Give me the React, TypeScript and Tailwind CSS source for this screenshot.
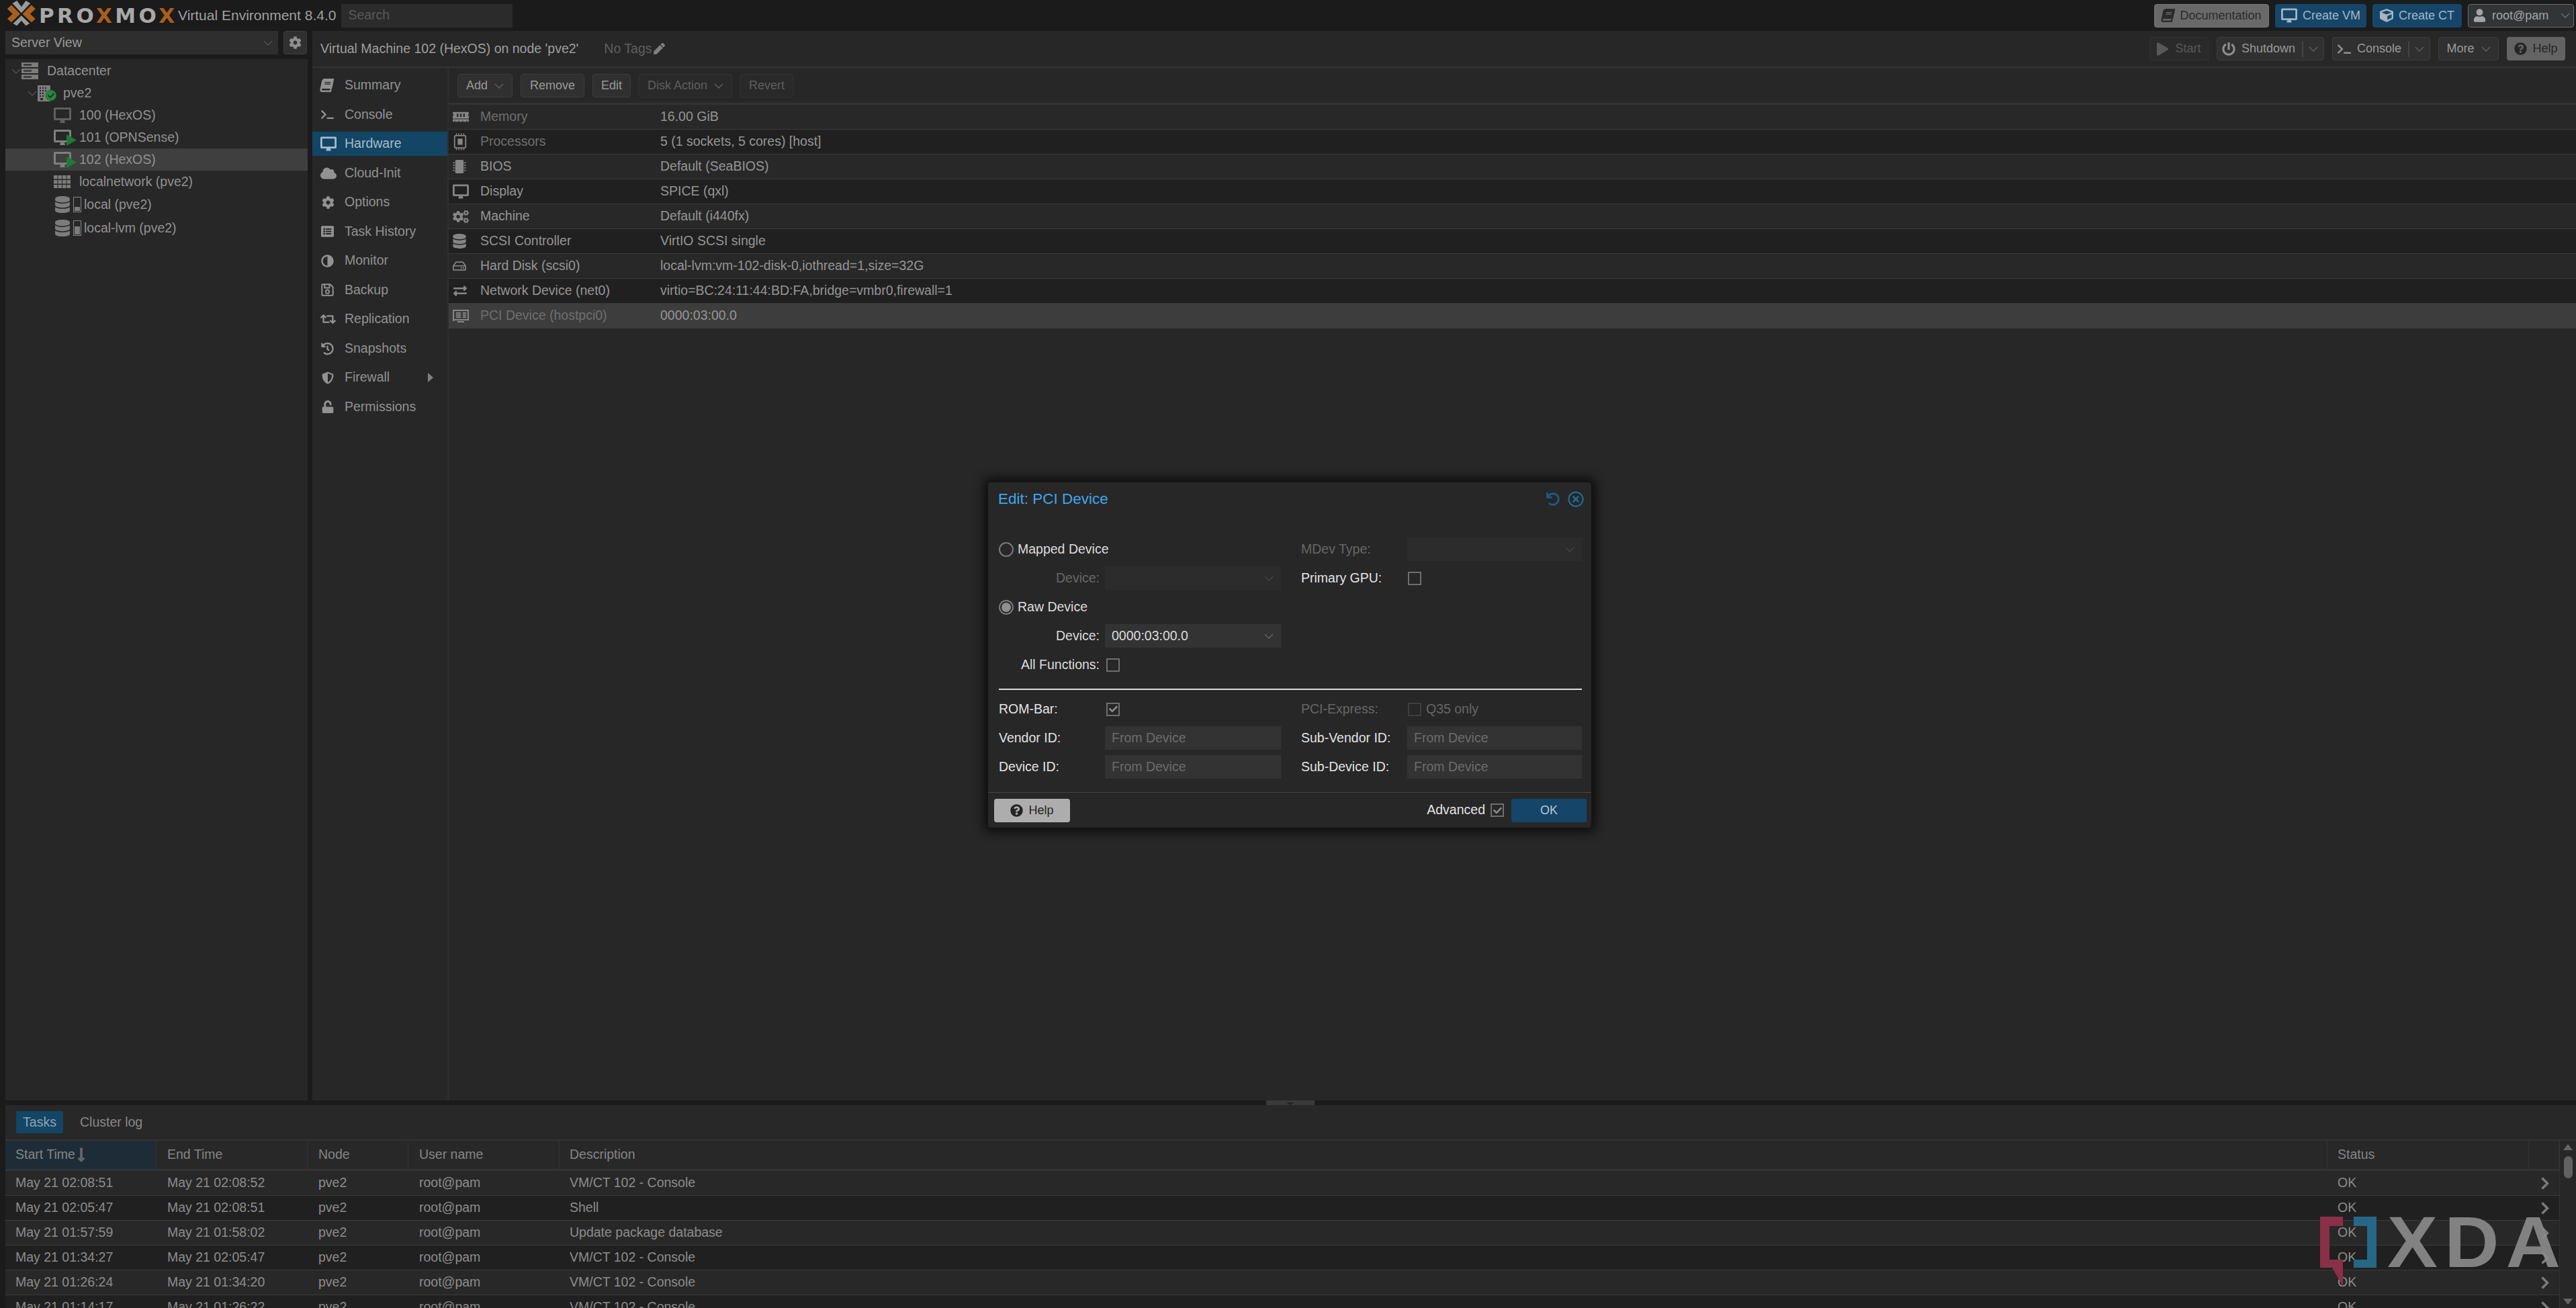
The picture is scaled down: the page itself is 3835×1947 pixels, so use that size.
import {
  FaAdjust,
  FaBook,
  FaCheck,
  FaCheckCircle,
  FaCloud,
  FaCog,
  FaCogs,
  FaCube,
  FaDatabase,
  FaExchangeAlt,
  FaHistory,
  FaListAlt,
  FaLongArrowAltDown,
  FaMemory,
  FaMicrochip,
  FaPen,
  FaPlay,
  FaPowerOff,
  FaQuestionCircle,
  FaRegHdd,
  FaRegSave,
  FaRegTimesCircle,
  FaRetweet,
  FaShieldAlt,
  FaTerminal,
  FaUndo,
  FaUnlock,
  FaUser,
} from "react-icons/fa";

function Caret({ className = "text-[#666666]" }: { className?: string }) {
  return (
    <svg viewBox="0 0 14 8" className={`w-[14px] h-[8px] shrink-0 ${className}`} fill="none" stroke="currentColor" strokeWidth="1.3">
      <path d="M1 1l6 6 6-6" />
    </svg>
  );
}

function Monitor({ className = "w-[24px] h-[22px]" }: { className?: string }) {
  return (
    <svg viewBox="0 0 26 23" className={className} fill="currentColor" fillRule="evenodd">
      <path d="M2 0h22a2 2 0 0 1 2 2v15a2 2 0 0 1-2 2h-8l1 4H9l1-4H2a2 2 0 0 1-2-2V2a2 2 0 0 1 2-2zM3 3v13h20V3z" />
    </svg>
  );
}

function CpuIcon() {
  return (
    <svg viewBox="0 0 24 30" className="w-[22px] h-[30px]" fill="none" stroke="currentColor">
      <rect x="3" y="5" width="18" height="20" rx="2" strokeWidth="2" />
      <rect x="8" y="10" width="8" height="10" fill="currentColor" stroke="none" />
      <path d="M6 1v4M10 1v4M14 1v4M18 1v4M6 25v4M10 25v4M14 25v4M18 25v4" strokeWidth="1.5" />
    </svg>
  );
}

function PciIcon() {
  return (
    <svg viewBox="0 0 24 24" className="w-[24px] h-[24px]" fill="none" stroke="currentColor">
      <path d="M1 3v17M1 4h22v14H1" strokeWidth="2" />
      <path d="M5 8h7M5 11h7M5 14h7M15 8h5M15 11h5M15 14h5M7 21h10" strokeWidth="2" />
    </svg>
  );
}

function RackIcon() {
  return (
    <svg viewBox="0 0 25 28" className="w-[25px] h-[28px]" fill="currentColor">
      <rect x="0" y="1" width="25" height="7" />
      <rect x="0" y="10" width="25" height="7" />
      <rect x="0" y="19" width="25" height="7" />
      <rect x="3" y="3.5" width="12" height="2" fill="#272727" />
      <rect x="3" y="12.5" width="12" height="2" fill="#272727" />
      <rect x="3" y="21.5" width="12" height="2" fill="#272727" />
    </svg>
  );
}

function NodeIcon() {
  return (
    <span className="relative w-[19px] h-[24px] block text-[#7c7c7c]">
      <svg viewBox="0 0 19 24" className="w-[19px] h-[24px]" fill="currentColor" fillRule="evenodd">
        <path d="M0 0h19v24H0zM3 3v2h2V3zM7 3v2h2V3zM11 3v2h2V3zM3 7v2h2V7zM7 7v2h2V7zM11 7v2h2V7zM3 11v2h2v-2zM7 11v2h2v-2zM3 15v2h2v-2zM7 15v2h2v-2zM4 19v3h4v-3z" />
      </svg>
      <span className="absolute left-[12px] top-[7px] w-[16px] h-[16px] rounded-full bg-[#272727] flex items-center justify-center">
        <FaCheckCircle className="w-[16px] h-[16px] text-[#1f8a3e]" />
      </span>
    </span>
  );
}

function VmIcon({ running, dark }: { running?: boolean; dark?: boolean }) {
  return (
    <span className={`relative w-[26px] h-[23px] block ${dark ? "text-[#5f5f5f]" : "text-[#7f7f7f]"}`}>
      <Monitor className="w-[26px] h-[23px]" />
      {running && (
        <svg viewBox="0 0 15 17" className="absolute left-[19px] top-[7px] w-[15px] h-[17px]" fill="#1f7a34">
          <path d="M0 0l15 8.5L0 17z" />
        </svg>
      )}
    </span>
  );
}

function GridIcon() {
  return (
    <svg viewBox="0 0 25 19" className="w-[25px] h-[19px] text-[#7c7c7c]" fill="currentColor">
      {[0, 7, 14].map((y) =>
        [0, 6.5, 13, 19.5].map((x) => <rect key={`${x}-${y}`} x={x} y={y} width="5.5" height="5.5" />),
      )}
    </svg>
  );
}

function StorageIcon({ fill }: { fill: string }) {
  return (
    <span className="flex items-center gap-[5px] text-[#7c7c7c]">
      <FaDatabase className="w-[22px] h-[25px]" />
      <span className="w-[12px] h-[23px] border border-[#858585] flex items-end p-[1px]">
        <span className={`w-full bg-[#7c7c7c] ${fill}`} />
      </span>
    </span>
  );
}

const navItems = [
  { label: "Summary", icon: <FaBook className="w-[19px] h-[20px] -skew-x-12" /> },
  { label: "Console", icon: <FaTerminal className="w-[21px] h-[15px]" /> },
  { label: "Hardware", icon: <Monitor />, active: true },
  { label: "Cloud-Init", icon: <FaCloud className="w-[24px] h-[20px]" /> },
  { label: "Options", icon: <FaCog className="w-[19px] h-[19px] ml-[2px]" /> },
  { label: "Task History", icon: <FaListAlt className="w-[21px] h-[19px]" /> },
  { label: "Monitor", icon: <FaAdjust className="w-[19px] h-[19px] ml-[1px] rotate-180" /> },
  { label: "Backup", icon: <FaRegSave className="w-[19px] h-[21px] ml-[1px]" /> },
  { label: "Replication", icon: <FaRetweet className="w-[23px] h-[20px]" /> },
  { label: "Snapshots", icon: <FaHistory className="w-[19px] h-[20px] ml-[1px]" /> },
  { label: "Firewall", icon: <FaShieldAlt className="w-[18px] h-[21px] ml-[2px]" />, more: true },
  { label: "Permissions", icon: <FaUnlock className="w-[20px] h-[19px] ml-[1px]" /> },
];

const hardware = [
  { label: "Memory", value: "16.00 GiB", icon: <FaMemory className="w-[24px] h-[20px]" />, dim: true },
  { label: "Processors", value: "5 (1 sockets, 5 cores) [host]", icon: <CpuIcon />, dim: true },
  { label: "BIOS", value: "Default (SeaBIOS)", icon: <FaMicrochip className="w-[20px] h-[26px]" /> },
  { label: "Display", value: "SPICE (qxl)", icon: <Monitor className="w-[24px] h-[22px]" /> },
  { label: "Machine", value: "Default (i440fx)", icon: <FaCogs className="w-[24px] h-[21px]" /> },
  { label: "SCSI Controller", value: "VirtIO SCSI single", icon: <FaDatabase className="w-[20px] h-[22px]" /> },
  { label: "Hard Disk (scsi0)", value: "local-lvm:vm-102-disk-0,iothread=1,size=32G", icon: <FaRegHdd className="w-[20px] h-[20px]" /> },
  { label: "Network Device (net0)", value: "virtio=BC:24:11:44:BD:FA,bridge=vmbr0,firewall=1", icon: <FaExchangeAlt className="w-[22px] h-[20px]" /> },
  { label: "PCI Device (hostpci0)", value: "0000:03:00.0", icon: <PciIcon />, dim: true, selected: true },
];

const tasks = [
  ["May 21 02:08:51", "May 21 02:08:52", "VM/CT 102 - Console"],
  ["May 21 02:05:47", "May 21 02:08:51", "Shell"],
  ["May 21 01:57:59", "May 21 01:58:02", "Update package database"],
  ["May 21 01:34:27", "May 21 02:05:47", "VM/CT 102 - Console"],
  ["May 21 01:26:24", "May 21 01:34:20", "VM/CT 102 - Console"],
  ["May 21 01:14:17", "May 21 01:26:22", "VM/CT 102 - Console"],
];

function TreeRow({ indent, iconW, icon, label, selected, arrow, h = "h-[33px]" }: { indent: string; iconW: string; icon: React.ReactNode; label: string; selected?: boolean; arrow?: boolean; h?: string }) {
  return (
    <div className={`flex items-center text-[19.5px] text-[#919191] ${h} ${indent} ${selected ? "bg-[#3f3f3f]" : ""}`}>
      {arrow && (
        <span className="w-[15px]">
          <Caret className="text-[#505050]" />
        </span>
      )}
      <span className={`${iconW} shrink-0`}>{icon}</span>
      <span className="whitespace-nowrap">{label}</span>
    </div>
  );
}

function TopButton({ icon, label, tone, wide }: { icon: React.ReactNode; label: string; tone: string; wide: string }) {
  return (
    <div className={`h-[35px] flex items-center justify-center gap-[8px] rounded-[4px] text-[18px] ${tone} ${wide}`}>
      {icon}
      <span>{label}</span>
    </div>
  );
}

function ToolButton({ label, w, disabled, menu }: { label: string; w: string; disabled?: boolean; menu?: boolean }) {
  return (
    <div className={`h-[35px] flex items-center justify-center gap-[10px] rounded-[4px] border text-[18px] ${w} ${disabled ? "bg-[#292929] border-[#333333] text-[#5e5e5e]" : "bg-[#303030] border-[#3c3c3c] text-[#999999]"}`}>
      <span className="whitespace-nowrap">{label}</span>
      {menu && <Caret className="text-[#606060]" />}
    </div>
  );
}

function SplitToolButton({ icon, label, w }: { icon: React.ReactNode; label: string; w: string }) {
  return (
    <div className={`h-[35px] flex items-center rounded-[4px] border bg-[#303030] border-[#3c3c3c] text-[18px] text-[#999999] pl-[7px] ${w}`}>
      {icon}
      <span className="ml-[9px] whitespace-nowrap">{label}</span>
      <span className="ml-auto h-[24px] border-l-2 border-[#444444] w-[32px] flex items-center justify-center">
        <Caret className="text-[#606060]" />
      </span>
    </div>
  );
}

function Radio({ on }: { on?: boolean }) {
  return (
    <span className="w-[22px] h-[22px] rounded-full border-2 border-[#7a7a7a] flex items-center justify-center shrink-0">
      {on && <span className="w-[14px] h-[14px] rounded-full bg-[#8f8f8f]" />}
    </span>
  );
}

function Check({ on, disabled }: { on?: boolean; disabled?: boolean }) {
  return (
    <span className={`w-[20px] h-[20px] border-2 flex items-center justify-center shrink-0 ${disabled ? "border-[#3e3e3e]" : "border-[#6e6e6e]"}`}>
      {on && <FaCheck className="w-[13px] h-[13px] text-[#8a8a8a]" />}
    </span>
  );
}

function Combo({ value, disabled, w = "w-[262px]" }: { value?: string; disabled?: boolean; w?: string }) {
  return (
    <div className={`h-[35px] flex items-center pl-[10px] pr-[11px] text-[19.5px] text-[#dcdcdc] ${w} ${disabled ? "bg-[#2c2c2c]" : "bg-[#333333]"}`}>
      <span>{value}</span>
      <span className="ml-auto">
        <Caret className={disabled ? "text-[#444444]" : "text-[#666666]"} />
      </span>
    </div>
  );
}

function IdField({ label, w = "w-[262px]" }: { label: string; w?: string }) {
  return (
    <div className="h-[35px] flex items-center text-[19.5px]">
      <span className="w-[158px] text-[#e2e2e2]">{label}</span>
      <div className={`h-[35px] flex items-center pl-[10px] bg-[#333333] text-[#6c6c6c] ${w}`}>From Device</div>
    </div>
  );
}

function PciDialog() {
  return (
    <div className="absolute left-[1471px] top-[718px] w-[898px] h-[514px] flex flex-col bg-[#272727] rounded-[4px] shadow-[0_0_16px_6px_#0c0c0c] text-[19.5px]">
      <div className="h-[50px] flex items-center pl-[15px] pr-[11px]">
        <span className="text-[22.5px] text-[#3ea6ee]">Edit: PCI Device</span>
        <FaUndo className="ml-auto w-[20px] h-[20px] text-[#1d5a85]" />
        <FaRegTimesCircle className="ml-[12px] w-[24px] h-[24px] text-[#1d6d95]" />
      </div>
      <div className="flex-1 pl-[16px] pr-[14px] pt-[32px]">
        <div className="flex gap-[30px]">
          <div className="w-[420px] flex flex-col gap-[8px]">
            <div className="h-[35px] flex items-center gap-[6px] text-[#dcdcdc]">
              <Radio />
              Mapped Device
            </div>
            <div className="h-[35px] flex items-center justify-end gap-[8px]">
              <span className="text-[#686868]">Device:</span>
              <Combo disabled />
            </div>
            <div className="h-[35px] flex items-center gap-[6px] text-[#dcdcdc]">
              <Radio on />
              Raw Device
            </div>
            <div className="h-[35px] flex items-center justify-end gap-[8px]">
              <span className="text-[#dcdcdc]">Device:</span>
              <Combo value="0000:03:00.0" />
            </div>
            <div className="h-[35px] flex items-center justify-end gap-[10px]">
              <span className="text-[#dcdcdc]">All Functions:</span>
              <span className="w-[260px]">
                <Check />
              </span>
            </div>
          </div>
          <div className="w-[418px] flex flex-col gap-[8px]">
            <div className="h-[35px] flex items-center">
              <span className="w-[158px] text-[#666666]">MDev Type:</span>
              <Combo disabled w="w-[260px]" />
            </div>
            <div className="h-[35px] flex items-center">
              <span className="w-[159px] text-[#e2e2e2]">Primary GPU:</span>
              <Check />
            </div>
          </div>
        </div>
        <div className="h-[2px] bg-[#dddddd] mt-[18px] mb-[11px]" />
        <div className="flex gap-[30px]">
          <div className="w-[420px] flex flex-col gap-[8px]">
            <div className="h-[35px] flex items-center">
              <span className="w-[160px] text-[#e2e2e2]">ROM-Bar:</span>
              <Check on />
            </div>
            <IdField label="Vendor ID:" />
            <IdField label="Device ID:" />
          </div>
          <div className="w-[418px] flex flex-col gap-[8px]">
            <div className="h-[35px] flex items-center">
              <span className="w-[159px] text-[#666666]">PCI-Express:</span>
              <Check disabled />
              <span className="ml-[7px] text-[#666666]">Q35 only</span>
            </div>
            <IdField label="Sub-Vendor ID:" w="w-[260px]" />
            <IdField label="Sub-Device ID:" w="w-[260px]" />
          </div>
        </div>
      </div>
      <div className="h-[53px] flex items-center border-t border-[#444444] pl-[9px] pr-[7px]">
        <div className="w-[113px] h-[35px] flex items-center justify-center gap-[8px] rounded-[4px] bg-[#adadad] text-[18px] text-[#242424]">
          <FaQuestionCircle className="w-[19px] h-[19px]" />
          Help
        </div>
        <span className="ml-auto text-[#e2e2e2]">Advanced</span>
        <span className="ml-[8px]">
          <Check on />
        </span>
        <div className="ml-[11px] w-[112px] h-[35px] flex items-center justify-center rounded-[4px] bg-[#154669] text-[18px] text-[#b8c8d4]">OK</div>
      </div>
    </div>
  );
}

export default function App() {
  return (
    <div className="relative w-[3835px] h-[1947px] overflow-hidden flex flex-col bg-[#1b1b1b] font-['Liberation_Sans',Arial,sans-serif]">
      <div className="h-[46px] flex items-center shrink-0">
        <svg viewBox="0 0 170 138" className="w-[57px] h-[46px] shrink-0">
          <path d="M32 40L50 22l40 40-40 38-18-16 24-22z" fill="#a85f1c" />
          <path d="M158 40l-18-18-40 40 40 38 18-16-24-22z" fill="#a85f1c" />
          <path d="M55 15l20-12 20 27 20-27 20 12-40 43z" fill="#9a9a9a" />
          <path d="M58 105l37-35 37 35-17 10-20-23-20 23z" fill="#9a9a9a" />
        </svg>
        <span className="w-[208px] shrink-0 pl-[1px] text-[31px] leading-none font-bold tracking-[4.4px] text-[#a8a8a8] font-['DejaVu_Sans',sans-serif] whitespace-nowrap">
          PRO<span className="text-[#a85f1c]">X</span>MO<span className="text-[#a85f1c]">X</span>
        </span>
        <span className="text-[21px] text-[#a0a0a0] whitespace-nowrap">Virtual Environment 8.4.0</span>
        <div className="ml-[8px] w-[255px] h-[35px] flex items-center pl-[10px] bg-[#2b2b2b] text-[19.5px] text-[#585858]">Search</div>
        <div className="ml-auto pr-[3px] flex items-center gap-[9px]">
          <TopButton wide="w-[171px]" tone="bg-[#696969] border border-[#777777] text-[#2b2b2b]" icon={<FaBook className="w-[19px] h-[20px] -skew-x-12" />} label="Documentation" />
          <TopButton wide="w-[136px]" tone="bg-[#154669] text-[#a5b5c2]" icon={<Monitor />} label="Create VM" />
          <TopButton wide="w-[133px]" tone="bg-[#154669] text-[#a5b5c2]" icon={<FaCube className="w-[20px] h-[22px]" />} label="Create CT" />
          <div className="w-[158px] h-[35px] flex items-center rounded-[4px] border border-[#6a6a6a] bg-[#323536] text-[18px] text-[#a5a5a5] pl-[8px]">
            <FaUser className="w-[17px] h-[20px]" />
            <span className="ml-[10px]">root@pam</span>
            <span className="ml-auto mr-[5px]">
              <Caret className="text-[#6d6d6d]" />
            </span>
          </div>
        </div>
      </div>

      <div className="h-[1592px] flex shrink-0">
        <div className="w-[465px] pl-[8px] pr-[7px] flex flex-col shrink-0">
          <div className="h-[35px] flex gap-[8px]">
            <div className="w-[406px] flex items-center pl-[9px] pr-[8px] bg-[#2e2e2e] text-[19.5px] text-[#999999]">
              <span>Server View</span>
              <span className="ml-auto">
                <Caret className="text-[#505050]" />
              </span>
            </div>
            <div className="w-[35px] flex items-center justify-center rounded-[4px] bg-[#303030] border border-[#3c3c3c]">
              <FaCog className="w-[19px] h-[19px] text-[#8e8e8e]" />
            </div>
          </div>
          <div className="mt-[7px] flex-1 pt-[1px] bg-[#272727]">
            <TreeRow indent="pl-[9px]" iconW="w-[38px] text-[#7c7c7c]" arrow label="Datacenter" icon={<RackIcon />} />
            <TreeRow indent="pl-[33px]" iconW="w-[38px]" arrow label="pve2" icon={<NodeIcon />} />
            <TreeRow indent="pl-[72px]" iconW="w-[38px]" label="100 (HexOS)" icon={<VmIcon dark />} />
            <TreeRow indent="pl-[72px]" iconW="w-[38px]" label="101 (OPNSense)" icon={<VmIcon running />} />
            <TreeRow indent="pl-[72px]" iconW="w-[38px]" label="102 (HexOS)" icon={<VmIcon running />} selected />
            <TreeRow indent="pl-[72px]" iconW="w-[38px]" label="localnetwork (pve2)" icon={<GridIcon />} />
            <TreeRow indent="pl-[74px]" iconW="w-[43px]" label="local (pve2)" h="h-[35px]" icon={<StorageIcon fill="h-[6px]" />} />
            <TreeRow indent="pl-[74px]" iconW="w-[43px]" label="local-lvm (pve2)" h="h-[35px]" icon={<StorageIcon fill="h-[12px]" />} />
          </div>
        </div>

        <div className="flex-1 flex flex-col bg-[#272727]">
          <div className="h-[55px] flex items-center border-b-2 border-[#333333] shrink-0 pl-[12px] pr-[16px]">
            <span className="text-[19.5px] text-[#9e9e9e] whitespace-nowrap">Virtual Machine 102 (HexOS) on node 'pve2'</span>
            <span className="ml-[38px] text-[19.5px] text-[#5f5f5f]">No Tags</span>
            <FaPen className="ml-[2px] w-[17px] h-[17px] text-[#808080]" />
            <div className="ml-auto flex items-center gap-[12px]">
              <div className="w-[88px] h-[35px] flex items-center justify-center gap-[10px] rounded-[4px] border border-[#333333] bg-[#2a2a2a] text-[18px] text-[#585858]">
                <FaPlay className="w-[17px] h-[20px]" />
                Start
              </div>
              <SplitToolButton w="w-[160px]" label="Shutdown" icon={<FaPowerOff className="w-[20px] h-[22px] text-[#8e8e8e]" />} />
              <SplitToolButton w="w-[146px]" label="Console" icon={<FaTerminal className="w-[20px] h-[16px] text-[#8e8e8e]" />} />
              <ToolButton w="w-[90px]" label="More" menu />
              <div className="w-[87px] h-[35px] flex items-center justify-center gap-[8px] rounded-[4px] bg-[#636363] text-[18px] text-[#262626]">
                <FaQuestionCircle className="w-[19px] h-[19px]" />
                Help
              </div>
            </div>
          </div>
          <div className="flex-1 flex">
            <div className="w-[203px] border-r-2 border-[#2f2f2f] pt-[8px] shrink-0">
              {navItems.map((item) => (
                <div key={item.label} className={`h-[36px] mb-[7.5px] flex items-center pl-[12px] text-[19.5px] ${item.active ? "bg-[#134565] text-[#a7bccc]" : "text-[#929292]"}`}>
                  <span className="w-[36px] flex justify-start">{item.icon}</span>
                  <span>{item.label}</span>
                  {item.more && <span className="ml-auto mr-[21px] w-0 h-0 border-y-[7px] border-y-transparent border-l-[8px] border-l-[#808080]" />}
                </div>
              ))}
            </div>
            <div className="flex-1 flex flex-col">
              <div className="h-[55px] flex items-start pt-[9px] gap-[12px] pl-[13px] shrink-0 border-b-[3px] border-[#333333]">
                <ToolButton w="w-[82px]" label="Add" menu />
                <ToolButton w="w-[95px]" label="Remove" />
                <ToolButton w="w-[57px]" label="Edit" />
                <ToolButton w="w-[139px]" label="Disk Action" disabled menu />
                <ToolButton w="w-[79px]" label="Revert" disabled />
              </div>
              {hardware.map((row, i) => (
                <div
                  key={row.label}
                  className={`h-[37px] flex items-center border-b border-[#3a3a3a] text-[19.5px] ${row.selected ? "bg-[#3d3d3d]" : i % 2 ? "bg-[#202020]" : "bg-[#282828]"}`}
                >
                  <span className="w-[47px] pl-[6px] flex items-center text-[#858585]">{row.icon}</span>
                  <span className={`w-[268px] whitespace-nowrap ${row.dim ? "text-[#6f6f6f]" : "text-[#959595]"}`}>{row.label}</span>
                  <span className="text-[#959595] whitespace-nowrap">{row.value}</span>
                </div>
              ))}
            </div>
          </div>
        </div>
      </div>

      <div className="h-[7px] shrink-0 flex justify-center">
        <div className="ml-[7px] w-[72px] h-[7px] bg-[#3a3a3a] flex justify-center items-end">
          <span className="w-0 h-0 border-x-[6px] border-x-transparent border-t-[4px] border-t-[#222222]" />
        </div>
      </div>

      <div className="flex-1 flex flex-col ml-[8px] bg-[#282828] overflow-hidden">
        <div className="h-[53px] flex items-center pl-[16px] gap-[25px] border-b-2 border-[#333333] shrink-0 text-[19.5px]">
          <div className="w-[70px] h-[33px] flex items-center justify-center rounded-[2px] bg-[#134565] text-[#8fa3b3]">Tasks</div>
          <div className="text-[#888888]">Cluster log</div>
        </div>
        <div className="flex flex-1 min-h-0">
          <div className="flex-1 flex flex-col min-w-0">
            <div className="h-[45px] grid grid-cols-[225px_225px_150px_225px_2632px_300px_45px] border-b-[3px] border-[#333333] text-[19.5px] text-[#858585] shrink-0">
              <div className="pl-[15px] flex items-center gap-[3px] bg-[#1e2c38] border-r border-[#333333]">
                Start Time
                <FaLongArrowAltDown className="w-[12px] h-[24px] text-[#666666]" />
              </div>
              <div className="pl-[16px] flex items-center border-r border-[#333333]">End Time</div>
              <div className="pl-[16px] flex items-center border-r border-[#333333]">Node</div>
              <div className="pl-[16px] flex items-center border-r border-[#333333]">User name</div>
              <div className="pl-[15px] flex items-center border-r border-[#333333]">Description</div>
              <div className="pl-[15px] flex items-center border-r border-[#333333]">Status</div>
              <div className="border-r border-[#333333]" />
            </div>
            <div className="flex-1 overflow-hidden">
              {tasks.map((row, i) => (
                <div key={row[0]} className={`h-[37px] grid grid-cols-[225px_225px_150px_225px_2632px_300px_45px] items-center border-b border-[#3a3a3a] text-[19.5px] text-[#8c8c8c] ${i % 2 ? "bg-[#202020]" : "bg-[#282828]"}`}>
                  <span className="pl-[15px]">{row[0]}</span>
                  <span className="pl-[16px]">{row[1]}</span>
                  <span className="pl-[16px]">pve2</span>
                  <span className="pl-[16px]">root@pam</span>
                  <span className="pl-[15px]">{row[2]}</span>
                  <span className="pl-[15px]">OK</span>
                  <span className="pl-[17px]">
                    <svg viewBox="0 0 13 19" className="w-[13px] h-[19px] text-[#7a7a7a]" fill="none" stroke="currentColor" strokeWidth="3.5">
                      <path d="M2.5 1.5l8 8-8 8" />
                    </svg>
                  </span>
                </div>
              ))}
            </div>
          </div>
          <div className="w-[25px] shrink-0 flex flex-col items-center py-[5px] bg-[#272727] border-l border-[#333333]">
            <span className="w-0 h-0 border-x-[7px] border-x-transparent border-b-[9px] border-b-[#666666]" />
            <span className="mt-[9px] w-[13px] h-[33px] rounded-full bg-[#616161]" />
            <span className="mt-auto w-0 h-0 border-x-[7px] border-x-transparent border-t-[9px] border-t-[#666666]" />
          </div>
        </div>
      </div>

      <PciDialog />

      <div className="absolute left-[3454px] top-[1811px] flex items-start gap-[16px] pointer-events-none">
        <svg viewBox="0 0 84 104" className="w-[84px] h-[104px]">
          <path d="M0 0H34V14H14V64H34V104L18 76H0Z" fill="#8a3049" />
          <path d="M50 0H84V76H50V64H70V14H50Z" fill="#256785" />
        </svg>
        <span className="-mt-[22px] origin-left scale-x-[1.04] text-[108px] leading-[120px] font-bold tracking-[10px] text-[#8c8c8c]/90">XDA</span>
      </div>
    </div>
  );
}
